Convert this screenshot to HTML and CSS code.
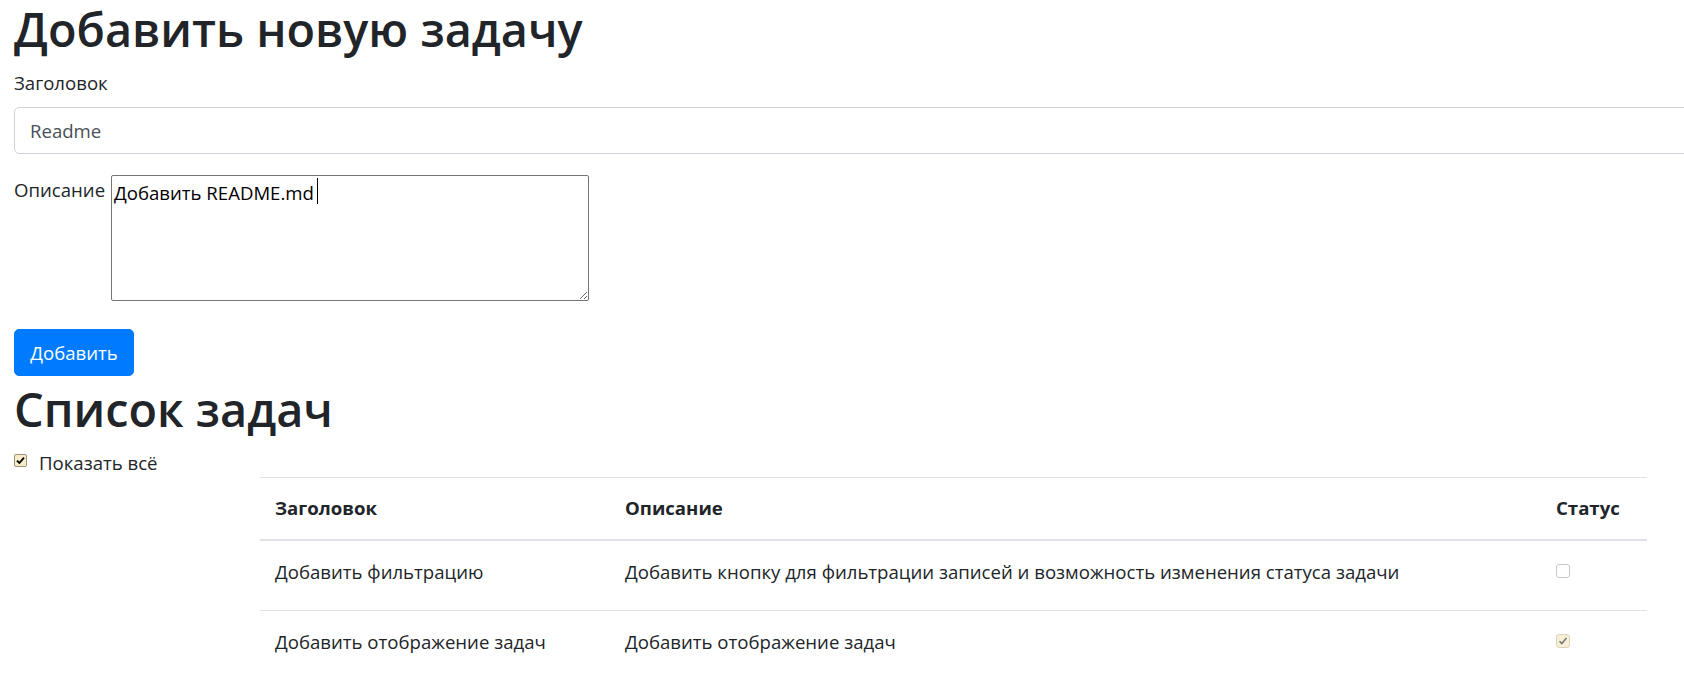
FILE: index.html
```html
<!DOCTYPE html>
<html lang="ru">
<head>
<meta charset="utf-8">
<title>Задачи</title>
<link rel="stylesheet" href="styles.css">
</head>
<body>
<div class="page">
  <h1 class="heading">Добавить новую задачу</h1>
  <form class="task-form">
    <label class="field-label" for="title">Заголовок</label>
    <input id="title" class="form-control" type="text" value="Readme">
    <div class="desc-row">
      <label class="desc-label" for="desc">Описание</label>
      <div class="desc-wrap">
        <textarea id="desc" class="desc-input">Добавить README.md</textarea>
        <span class="caret"></span>
      </div>
    </div>
    <button type="button" class="btn">Добавить</button>
  </form>
  <h1 class="heading heading-list">Список задач</h1>
  <label class="show-all"><input type="checkbox" class="check check-main" checked><span>Показать всё</span></label>
  <table class="tasks">
    <colgroup><col class="col-title"><col class="col-desc"><col class="col-status"></colgroup>
    <thead>
      <tr><th>Заголовок</th><th>Описание</th><th>Статус</th></tr>
    </thead>
    <tbody>
      <tr><td>Добавить фильтрацию</td><td>Добавить кнопку для фильтрации записей и возможность изменения статуса задачи</td><td><input type="checkbox" class="check check-row" disabled></td></tr>
      <tr><td>Добавить отображение задач</td><td>Добавить отображение задач</td><td><input type="checkbox" class="check check-row check-done" checked disabled></td></tr>
    </tbody>
  </table>
</div>
</body>
</html>
```
FILE: styles.css
```css
html, body {
  margin: 0;
  padding: 0;
  overflow: hidden;
  background: #fff;
}
body {
  font-family: "Open Sans", "Noto Sans", sans-serif;
  font-size: 18.6px;
  line-height: 30px;
  color: #212529;
}
.page {
  padding-left: 14px;
}
.heading {
  font-size: 46.8px;
  font-weight: 600;
  line-height: 58px;
  margin: 0 0 10px;
}
.heading-list {
  margin-top: 4px;
}
.task-form {
  margin: 0;
}
.field-label {
  display: block;
  margin-bottom: 9px;
}
.form-control {
  display: block;
  box-sizing: border-box;
  width: 1720px;
  height: 47px;
  margin: 0 0 21px;
  padding: 7px 15px;
  font: inherit;
  line-height: 30px;
  color: #495057;
  background: #fff;
  border: 1px solid #ced4da;
  border-radius: 5px;
}
.desc-row {
  display: flex;
  align-items: flex-start;
  margin-bottom: 28px;
}
.desc-label {
  flex: 0 0 97px;
}
.desc-wrap {
  position: relative;
}
.desc-input {
  display: block;
  box-sizing: border-box;
  width: 478px;
  height: 126px;
  margin: 0;
  padding: 4px 2px 2px;
  font-family: inherit;
  font-size: 18.6px;
  line-height: normal;
  color: #000;
  background: #fff;
  border: 1px solid #767676;
  border-radius: 2px;
  resize: both;
}
.caret {
  position: absolute;
  left: 206px;
  top: 3px;
  width: 1px;
  height: 26px;
  background: #000;
}
.btn {
  display: block;
  box-sizing: border-box;
  width: 120px;
  height: 47px;
  padding: 0;
  font: inherit;
  line-height: 45px;
  color: #fff;
  background: #007bff;
  border: 1px solid #007bff;
  border-radius: 5px;
}
.show-all {
  display: flex;
  align-items: flex-start;
  height: 29px;
}
.check {
  appearance: none;
  -webkit-appearance: none;
  display: block;
  box-sizing: border-box;
  width: 13px;
  height: 13px;
  margin: 6px 12px 0 0;
  border-radius: 2px;
  background-repeat: no-repeat;
  background-position: center;
}
.check-main {
  background-color: #f6ebc8;
  border: 1px solid #a0927a;
  background-image: url("data:image/svg+xml,%3Csvg xmlns='http://www.w3.org/2000/svg' width='11' height='11' viewBox='0 0 11 11'%3E%3Cpath d='M2 5.6 L4.4 8 L9 2.6' fill='none' stroke='%23000' stroke-width='1.8'/%3E%3C/svg%3E");
}
.check-row {
  width: 14px;
  height: 14px;
  margin: 7px 0 0 0;
  border-radius: 3px;
  background-color: #fff;
  border: 1px solid #c9c9c9;
}
.check-done {
  background-color: #f7efd6;
  border-color: #dcd3b8;
  background-image: url("data:image/svg+xml,%3Csvg xmlns='http://www.w3.org/2000/svg' width='12' height='12' viewBox='0 0 12 12'%3E%3Cpath d='M2.5 6.2 L4.8 8.5 L9.5 3' fill='none' stroke='%23777' stroke-width='1.6'/%3E%3C/svg%3E");
}
.tasks {
  margin-left: 246px;
  width: 1387px;
  table-layout: fixed;
  border-collapse: collapse;
}
.col-title { width: 350px; }
.col-desc { width: 931px; }
.col-status { width: 106px; }
.tasks th,
.tasks td {
  text-align: left;
  vertical-align: top;
  border-top: 1px solid #dee2e6;
  white-space: nowrap;
}
.tasks th {
  padding: 15px 15px 16px;
  font-weight: 700;
  border-bottom: 2px solid #dee2e6;
}
.tasks td {
  padding: 16px 15px 23px;
}
```
